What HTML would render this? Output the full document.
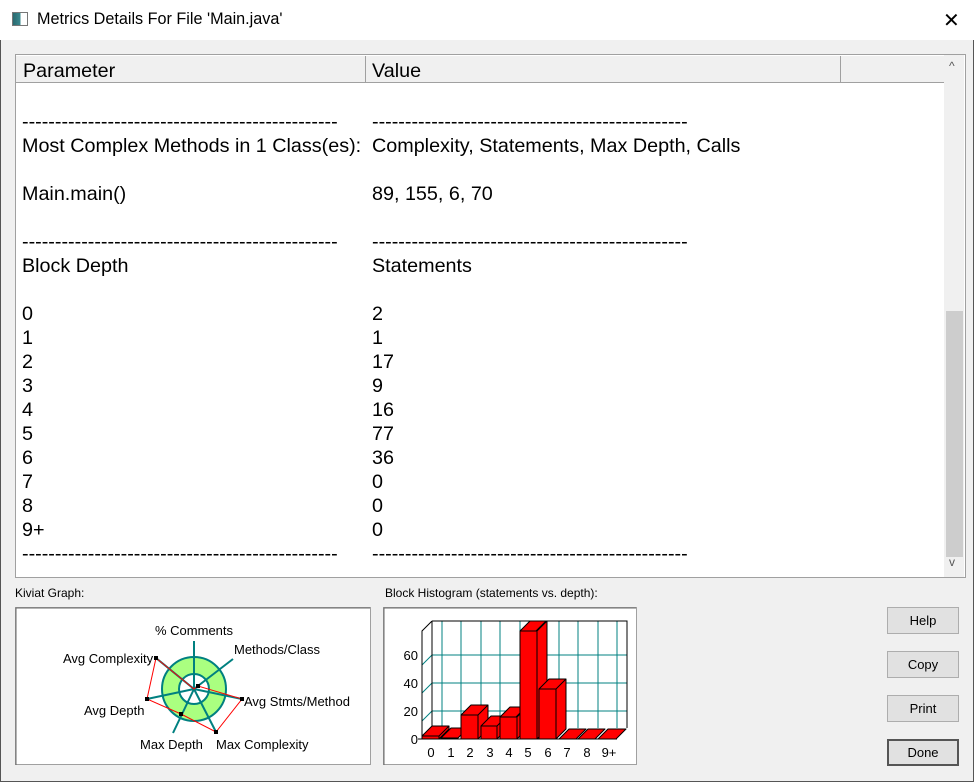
<!DOCTYPE html><html><head><style>
body{margin:0;width:974px;height:782px;background:#f0f0f0;font-family:"Liberation Sans",Arial,sans-serif;position:relative;overflow:hidden}
.a{position:absolute}
#win{left:0;top:0;width:972px;height:780px;border:1px solid #555;background:#f0f0f0}
#title{left:0;top:0;width:974px;height:40px;background:#fff}
#list{left:15px;top:54px;width:949px;height:522px;border:1px solid #a0a0a0;background:#fff;overflow:hidden}
.hd{top:1px;height:26px;background:#f0f0f0;border-bottom:1px solid #a0a0a0;font-size:19.75px;line-height:30px;box-sizing:content-box}
.row{position:absolute;font-size:19.75px;line-height:24px;white-space:pre}
.btn{position:absolute;left:887px;width:70px;height:25px;background:#e1e1e1;border:1px solid #adadad;font-size:13px;text-align:center;line-height:25px}
.lbl{font-size:12px}
</style></head><body>
<div id="win" class="a"></div>
<div id="title" class="a">
 <div class="a" style="left:12px;top:12px;width:14px;height:12px;border:1px solid #777;background:linear-gradient(90deg,#2a6a70 0,#3a8a90 55%,#fff 55%)"></div>
 <div class="a" style="left:37px;top:10px;font-size:16.2px">Metrics Details For File 'Main.java'</div>
 <div class="a" style="left:943px;top:8px;font-size:20px;font-weight:300">✕</div>
</div>
<div id="list" class="a">
 <div class="a hd" style="left:0;width:342px;border-right:1px solid #a0a0a0;padding-left:7px">Parameter</div>
 <div class="a hd" style="left:350px;width:468px;border-right:1px solid #a0a0a0;padding-left:6px">Value</div>
 <div class="a hd" style="left:825px;width:103px"></div>
 <div class="a" style="left:928px;top:0;width:20px;height:522px;background:#f0f0f0"></div>
 <div class="a" style="left:933px;top:4px;font-size:12px;color:#555">^</div>
 <div class="a" style="left:933px;top:500px;font-size:12px;color:#555">v</div>
 <div class="a" style="left:930px;top:256px;width:17px;height:246px;background:#cdcdcd"></div>
 <div class="a" style="left:6px;top:31px">
 <div class="row" style="top:24px">------------------------------------------------</div>
 <div class="row" style="top:48px">Most Complex Methods in 1 Class(es):</div>
 <div class="row" style="top:96px">Main.main()</div>
 <div class="row" style="top:144px">------------------------------------------------</div>
 <div class="row" style="top:168px">Block Depth</div>
 <div class="row" style="top:216px">0<br>1<br>2<br>3<br>4<br>5<br>6<br>7<br>8<br>9+<br>------------------------------------------------</div>
 </div>
 <div class="a" style="left:356px;top:31px">
 <div class="row" style="top:24px">------------------------------------------------</div>
 <div class="row" style="top:48px">Complexity, Statements, Max Depth, Calls</div>
 <div class="row" style="top:96px">89, 155, 6, 70</div>
 <div class="row" style="top:144px">------------------------------------------------</div>
 <div class="row" style="top:168px">Statements</div>
 <div class="row" style="top:216px">2<br>1<br>17<br>9<br>16<br>77<br>36<br>0<br>0<br>0<br>------------------------------------------------</div>
 </div>
</div>
<div class="a lbl" style="left:15px;top:586px">Kiviat Graph:</div>
<div class="a lbl" style="left:385px;top:586px">Block Histogram (statements vs. depth):</div>
<svg class="a" style="left:0;top:0" width="974" height="782" font-family="Liberation Sans,Arial,sans-serif">
 <rect x="15.5" y="607.5" width="355" height="157" fill="#fff" stroke="#a0a0a0"/>
 <path d="M16 765V608H370" stroke="#696969" fill="none"/>
 <circle cx="194" cy="689" r="24" fill="none" stroke="#aaff80" stroke-width="17"/>
 <circle cx="194" cy="689" r="32" fill="none" stroke="#008080" stroke-width="2"/>
 <circle cx="194" cy="689" r="15" fill="none" stroke="#008080" stroke-width="2"/>
 <g stroke="#008080" stroke-width="2">
 <line x1="194" y1="689" x2="194" y2="641"/><line x1="194" y1="689" x2="233" y2="659"/>
 <line x1="194" y1="689" x2="242" y2="699"/><line x1="194" y1="689" x2="216" y2="732"/>
 <line x1="194" y1="689" x2="173" y2="733"/><line x1="194" y1="689" x2="147" y2="699"/>
 <line x1="194" y1="689" x2="156" y2="658"/></g>
 <polygon points="194,689 198,686 242,699 216,732 181,714 147,699 156,658" fill="none" stroke="#f00"/>
 <g fill="#000"><rect x="154" y="656" width="4" height="4"/><rect x="240" y="697" width="4" height="4"/><rect x="214" y="730" width="4" height="4"/><rect x="145" y="697" width="4" height="4"/><rect x="179" y="712" width="4" height="4"/><rect x="196" y="684" width="4" height="4"/></g>
 <g font-size="13"><text x="155" y="635">% Comments</text><text x="234" y="654">Methods/Class</text><text x="244" y="706">Avg Stmts/Method</text><text x="216" y="749">Max Complexity</text><text x="140" y="749">Max Depth</text><text x="84" y="715">Avg Depth</text><text x="63" y="663">Avg Complexity</text></g>
 <rect x="383.5" y="607.5" width="253" height="157" fill="#fff" stroke="#a0a0a0"/>
 <path d="M384 765V608H636" stroke="#696969" fill="none"/>
 <g stroke="#008080"><line x1="432" y1="711" x2="627" y2="711"/><line x1="432" y1="683" x2="627" y2="683"/><line x1="432" y1="655" x2="627" y2="655"/>
 <line x1="442" y1="621" x2="442" y2="728"/><line x1="461" y1="621" x2="461" y2="728"/><line x1="481" y1="621" x2="481" y2="728"/><line x1="500" y1="621" x2="500" y2="728"/><line x1="520" y1="621" x2="520" y2="728"/><line x1="539" y1="621" x2="539" y2="728"/><line x1="559" y1="621" x2="559" y2="728"/><line x1="578" y1="621" x2="578" y2="728"/><line x1="598" y1="621" x2="598" y2="728"/><line x1="617" y1="621" x2="617" y2="728"/>
 <line x1="422" y1="721" x2="432" y2="711"/><line x1="422" y1="693" x2="432" y2="683"/><line x1="422" y1="665" x2="432" y2="655"/></g>
 <path d="M432 621H627V728M432 621V728M422 739V631L432 621" stroke="#000" fill="none"/>
 <g stroke="#000" fill="#f00" stroke-linejoin="round">
 <path d="M422 739h17v-3h-17z M422 736l10-10h17l-10 10z M439 736l10-10v3l-10 10z"/>
 <path d="M441 739h17v-1h-17z M441 738l10-10h17l-10 10z"/>
 <path d="M461 739h17v-24h-17z M461 715l10-10h17l-10 10z M478 715l10-10v24l-10 10z"/>
 <path d="M481 739h16v-13h-16z M481 726l10-10h16l-10 10z M497 726l10-10v13l-10 10z"/>
 <path d="M500 739h17v-22h-17z M500 717l10-10h16l-10 10z M517 717l10-10v22l-10 10z"/>
 <path d="M520 739h17v-108h-17z M520 631l10-10h16l-10 10z M537 631l10-10v108l-10 10z"/>
 <path d="M539 739h17v-50h-17z M539 689l10-10h17l-10 10z M556 689l10-10v50l-10 10z"/>
 <path d="M559 739l10-10h17l-10 10z"/><path d="M578 739l10-10h17l-10 10z"/><path d="M598 739l10-10h18l-10 10z"/>
 </g>
 <line x1="418" y1="739" x2="617" y2="739" stroke="#000"/>
 <g font-size="13" text-anchor="end"><text x="418" y="744">0</text><text x="418" y="716">20</text><text x="418" y="688">40</text><text x="418" y="660">60</text></g>
 <g font-size="13" text-anchor="middle"><text x="431" y="757">0</text><text x="451" y="757">1</text><text x="470" y="757">2</text><text x="490" y="757">3</text><text x="509" y="757">4</text><text x="528" y="757">5</text><text x="548" y="757">6</text><text x="567" y="757">7</text><text x="587" y="757">8</text><text x="609" y="757">9+</text></g>
</svg>
<div class="btn" style="top:607px">Help</div>
<div class="btn" style="top:651px">Copy</div>
<div class="btn" style="top:695px">Print</div>
<div class="btn" style="top:739px;border:2px solid #555;width:68px;height:23px;line-height:23px">Done</div>
</body></html>
